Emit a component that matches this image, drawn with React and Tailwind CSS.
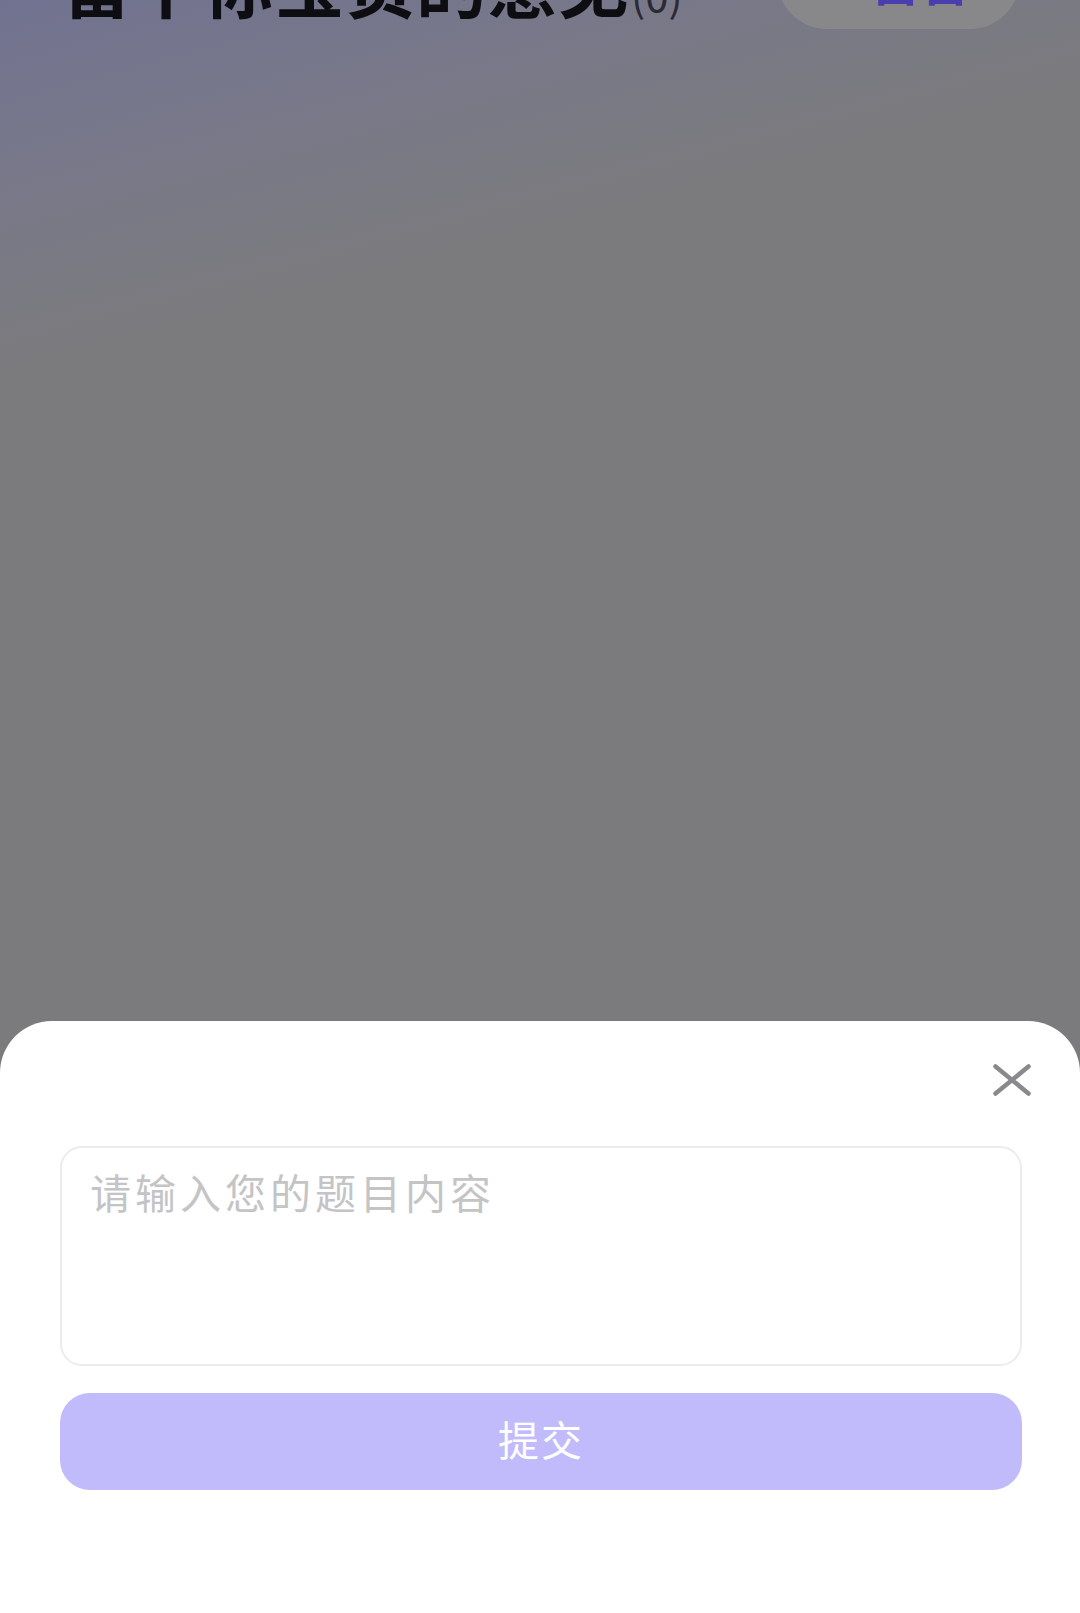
import React from 'react';

const cjk = "font-['Noto_Sans_CJK_SC','Noto_Sans',sans-serif]";

export default function App() {
  return (
    <div
      className={`w-[1080px] h-[1613px] overflow-hidden flex flex-col bg-[#7b7b7d] bg-[linear-gradient(165deg,#717290_0%,#78788a_9%,#7b7b7d_20%)] ${cjk}`}
    >
      {/* 背景页顶部（被遮罩） */}
      <div className="flex justify-between items-start pl-[61px] pr-[60px]">
        <div className="flex items-baseline mt-[-54px]">
          <span className="text-[71px] leading-none font-bold text-[#0d0d12]">留下你宝贵的意见</span>
          <span className="text-[42px] leading-none text-[#2a2a33] ml-[2px]">(0)</span>
        </div>
        <div className="mt-[-71px] w-[243px] h-[100px] rounded-full bg-[#88888a] flex items-center justify-center gap-[14px] text-[#4a3eae] font-bold">
          <span className="text-[50px] leading-none">+</span>
          <span className="text-[50px] leading-none">留言</span>
        </div>
      </div>

      <div className="flex-1" />

      {/* 底部弹层 */}
      <div className="h-[592px] bg-white rounded-t-[52px] flex flex-col">
        <div className="flex justify-end pt-[41px] pr-[47px]">
          <svg width="42" height="36" viewBox="0 0 42 36" fill="none">
            <path d="M4.5 4.5L37.5 31.5M37.5 4.5L4.5 31.5" stroke="#8a8a8c" strokeWidth="4.5" strokeLinecap="round" />
          </svg>
        </div>
        <div className="pl-[60px] pr-[58px] pt-[48px] flex flex-col">
          <textarea
            className={`h-[220px] w-full resize-none rounded-[22px] border-2 border-[#ececee] px-[28px] pt-[15px] text-[41px] leading-[56px] tracking-[4px] text-[#333] placeholder:text-[#c4c4c6] outline-none ${cjk}`}
            placeholder="请输入您的题目内容"
          />
          <button className="mt-[27px] h-[97px] w-full rounded-[30px] bg-[#c1bbfb] text-white text-[41px] leading-none tracking-[2px] pb-[6px]">
            提交
          </button>
        </div>
      </div>
    </div>
  );
}
